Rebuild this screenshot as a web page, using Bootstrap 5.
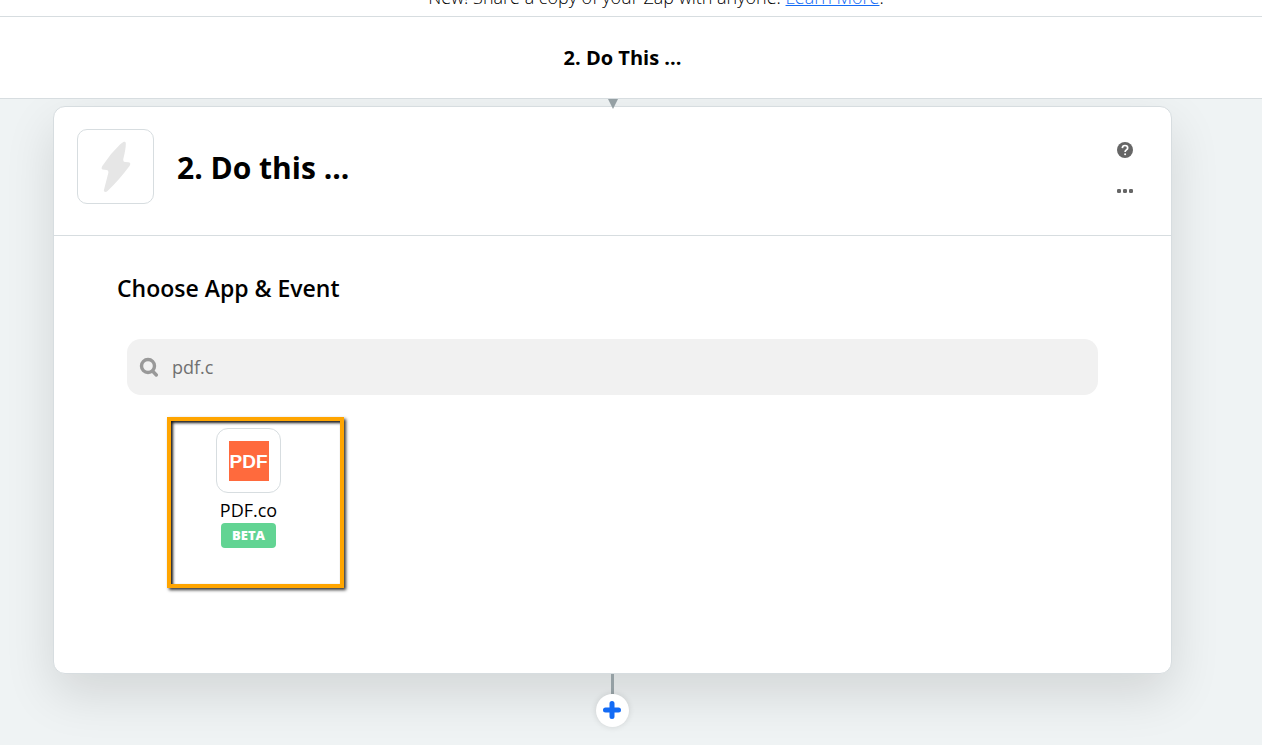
<!DOCTYPE html>
<html lang="en">
<head>
<meta charset="utf-8">
<meta name="viewport" content="width=device-width, initial-scale=1">
<title>Zap editor</title>
<link href="https://cdn.jsdelivr.net/npm/bootstrap@5.3.0/dist/css/bootstrap.min.css" rel="stylesheet">
<style>
  :root { --line: #d7dde0; --canvas: #eff3f4; --blue: #136bf5; }
  body { font-family: "Open Sans", "Noto Sans", sans-serif; color: #000; background: var(--canvas); }
  .rule-bottom { border-bottom: 1px solid var(--line); }
  .top-bars { z-index: 1; }
  /* announcement is scrolled mostly out of view */
  .announce { height: 17px; padding: 0 0 7px 50px; font-size: 18px; font-weight: 300; line-height: 24px; }
  .announce a { color: var(--blue); text-decoration-thickness: 1px; }
  .zap-title { height: 82px; padding: 0 17px 0 0; font-size: 20px; }
  .canvas-area { padding: 7px 90px 18px 53px; }
  .step { border: 1px solid var(--line); border-radius: 12px; box-shadow: 0 20px 50px rgba(0, 0, 0, .12); }
  .arrow { top: -8px; left: 50%; width: 10px; height: 10px; margin-left: -5px; z-index: 2; }
  .step-head { padding: 22px 37px 31px 23px; }
  .step-icon { width: 77px; height: 75px; border: 1px solid var(--line); border-radius: 10px; }
  .step-head h1 { font-size: 30px; font-weight: 700; line-height: 40px; margin: 3px 0 0 23px; }
  .icon-btn { width: 18px; height: 18px; line-height: 0; }
  .icon-stack { gap: 23px; padding-top: 12px; }
  .step-body { padding: 36px 63px 85px; }
  .step-body h2 { font-size: 23px; font-weight: 600; line-height: 32px; }
  .search { height: 56px; margin: 35px 10px 0; padding: 0 12px; border-radius: 14px; background: #f1f1f1; }
  .search input { margin-left: 13px; font-size: 18px; color: #707070; outline: 0; }
  .marked { width: 177px; height: 171px; margin: 22px 0 0 50px; border: 4px solid #ffa500; padding: 7px 14px 0 0;
    box-shadow: 2px 2px 3px rgba(0, 0, 0, .8), inset 2px 2px 3px rgba(0, 0, 0, .9); }
  .app-tile { font-size: 18px; line-height: 22px; color: #000; }
  .app-logo { width: 65px; height: 65px; border: 1px solid var(--line); border-radius: 12px; margin-bottom: 6px; }
  .pdf-mark { width: 40px; height: 40px; background: #ff6a3d; color: #fff; font: 700 19px/42px "Liberation Sans", sans-serif; }
  .beta { padding: 0 11px; margin-top: 2px; font-size: 13px; font-weight: 800; line-height: 25px; border-radius: 4px; color: #fff; background: #62d493; }
  .stem { width: 3px; height: 20px; background: #95a0a4; }
  .add { width: 33px; height: 33px; line-height: 0; box-shadow: 0 0 6px rgba(0, 0, 0, .12); }
</style>
</head>
<body>
<header class="top-bars bg-white position-relative">
  <div class="announce rule-bottom d-flex align-items-end justify-content-center overflow-hidden">
    <span>New! Share a copy of your Zap with anyone. <a href="#">Learn More</a>.</span>
  </div>
  <div class="zap-title rule-bottom d-flex align-items-center justify-content-center fw-bold">2. Do This ...</div>
</header>

<main class="canvas-area">
  <section class="step bg-white position-relative">
    <svg class="arrow position-absolute" viewBox="0 0 10 10" aria-hidden="true"><path d="M0 0h10L5 10z" fill="#95a0a4"/></svg>
    <div class="step-head rule-bottom d-flex align-items-start">
      <div class="step-icon d-flex align-items-center justify-content-center">
        <svg width="30" height="52" viewBox="0 0 30 52" aria-hidden="true">
          <path d="M22 1.200C23.800.2 25 1 24.800 3Q24.800 8 22.300 18Q21.800 21 24 21L27.500 21.200Q30.400 21.800 28.700 24.700Q18 39 6.800 49.800C4.800 51.800 2.300 51.300 3 48.800L7.300 32Q7.900 29.300 5.500 29L1.600 28.600Q-.3 27.800 1.500 24.700Q9 13 19 3.600Q20.500 2 22 1.200Z" fill="#e6e6e6"/>
        </svg>
      </div>
      <h1 class="align-self-center flex-grow-1">2. Do this ...</h1>
      <div class="icon-stack d-flex flex-column">
        <button type="button" class="icon-btn border-0 bg-transparent p-0" aria-label="Help">
          <svg width="18" height="18" viewBox="0 0 18 18"><circle cx="9" cy="9" r="8" fill="#666"/><path d="M6.300 7.100C6.400 5.400 7.500 4.500 9 4.500s2.700 1 2.700 2.400c0 2-2.600 2-2.600 4" fill="none" stroke="#fff" stroke-width="1.700"/><circle cx="9.100" cy="13.300" r="1" fill="#fff"/></svg>
        </button>
        <button type="button" class="icon-btn border-0 bg-transparent p-0" aria-label="More options">
          <svg width="18" height="18" viewBox="0 0 18 18" fill="#666"><rect x="1" y="7" width="4" height="4" rx="1.300"/><rect x="7" y="7" width="4" height="4" rx="1.300"/><rect x="13" y="7" width="4" height="4" rx="1.300"/></svg>
        </button>
      </div>
    </div>
    <div class="step-body">
      <h2 class="mb-0">Choose App &amp; Event</h2>
      <div class="search d-flex align-items-center">
        <svg width="20" height="20" viewBox="0 0 20 20" fill="none" stroke="#999" aria-hidden="true"><circle cx="9" cy="9" r="6.500" stroke-width="3.400"/><path d="M13.500 14L17.300 18" stroke-width="3.400" stroke-linecap="round"/></svg>
        <input type="text" class="border-0 bg-transparent p-0 flex-grow-1" value="pdf.c" aria-label="Search apps">
      </div>
      <div class="marked">
        <a href="#" class="app-tile d-flex flex-column align-items-center text-decoration-none">
          <span class="app-logo d-flex align-items-center justify-content-center"><span class="pdf-mark text-center">PDF</span></span>
          <span>PDF.co</span>
          <span class="beta">BETA</span>
        </a>
      </div>
    </div>
  </section>
  <div class="d-flex flex-column align-items-center position-relative">
    <div class="stem"></div>
    <button type="button" class="add border-0 rounded-circle bg-white p-0" aria-label="Add step">
      <svg width="19" height="19" viewBox="0 0 19 19"><path d="M9 2.500v13M2.500 9h13" stroke="#136bf5" stroke-width="5" stroke-linecap="round"/></svg>
    </button>
  </div>
</main>
<script src="https://cdn.jsdelivr.net/npm/bootstrap@5.3.0/dist/js/bootstrap.bundle.min.js"></script>
</body>
</html>
